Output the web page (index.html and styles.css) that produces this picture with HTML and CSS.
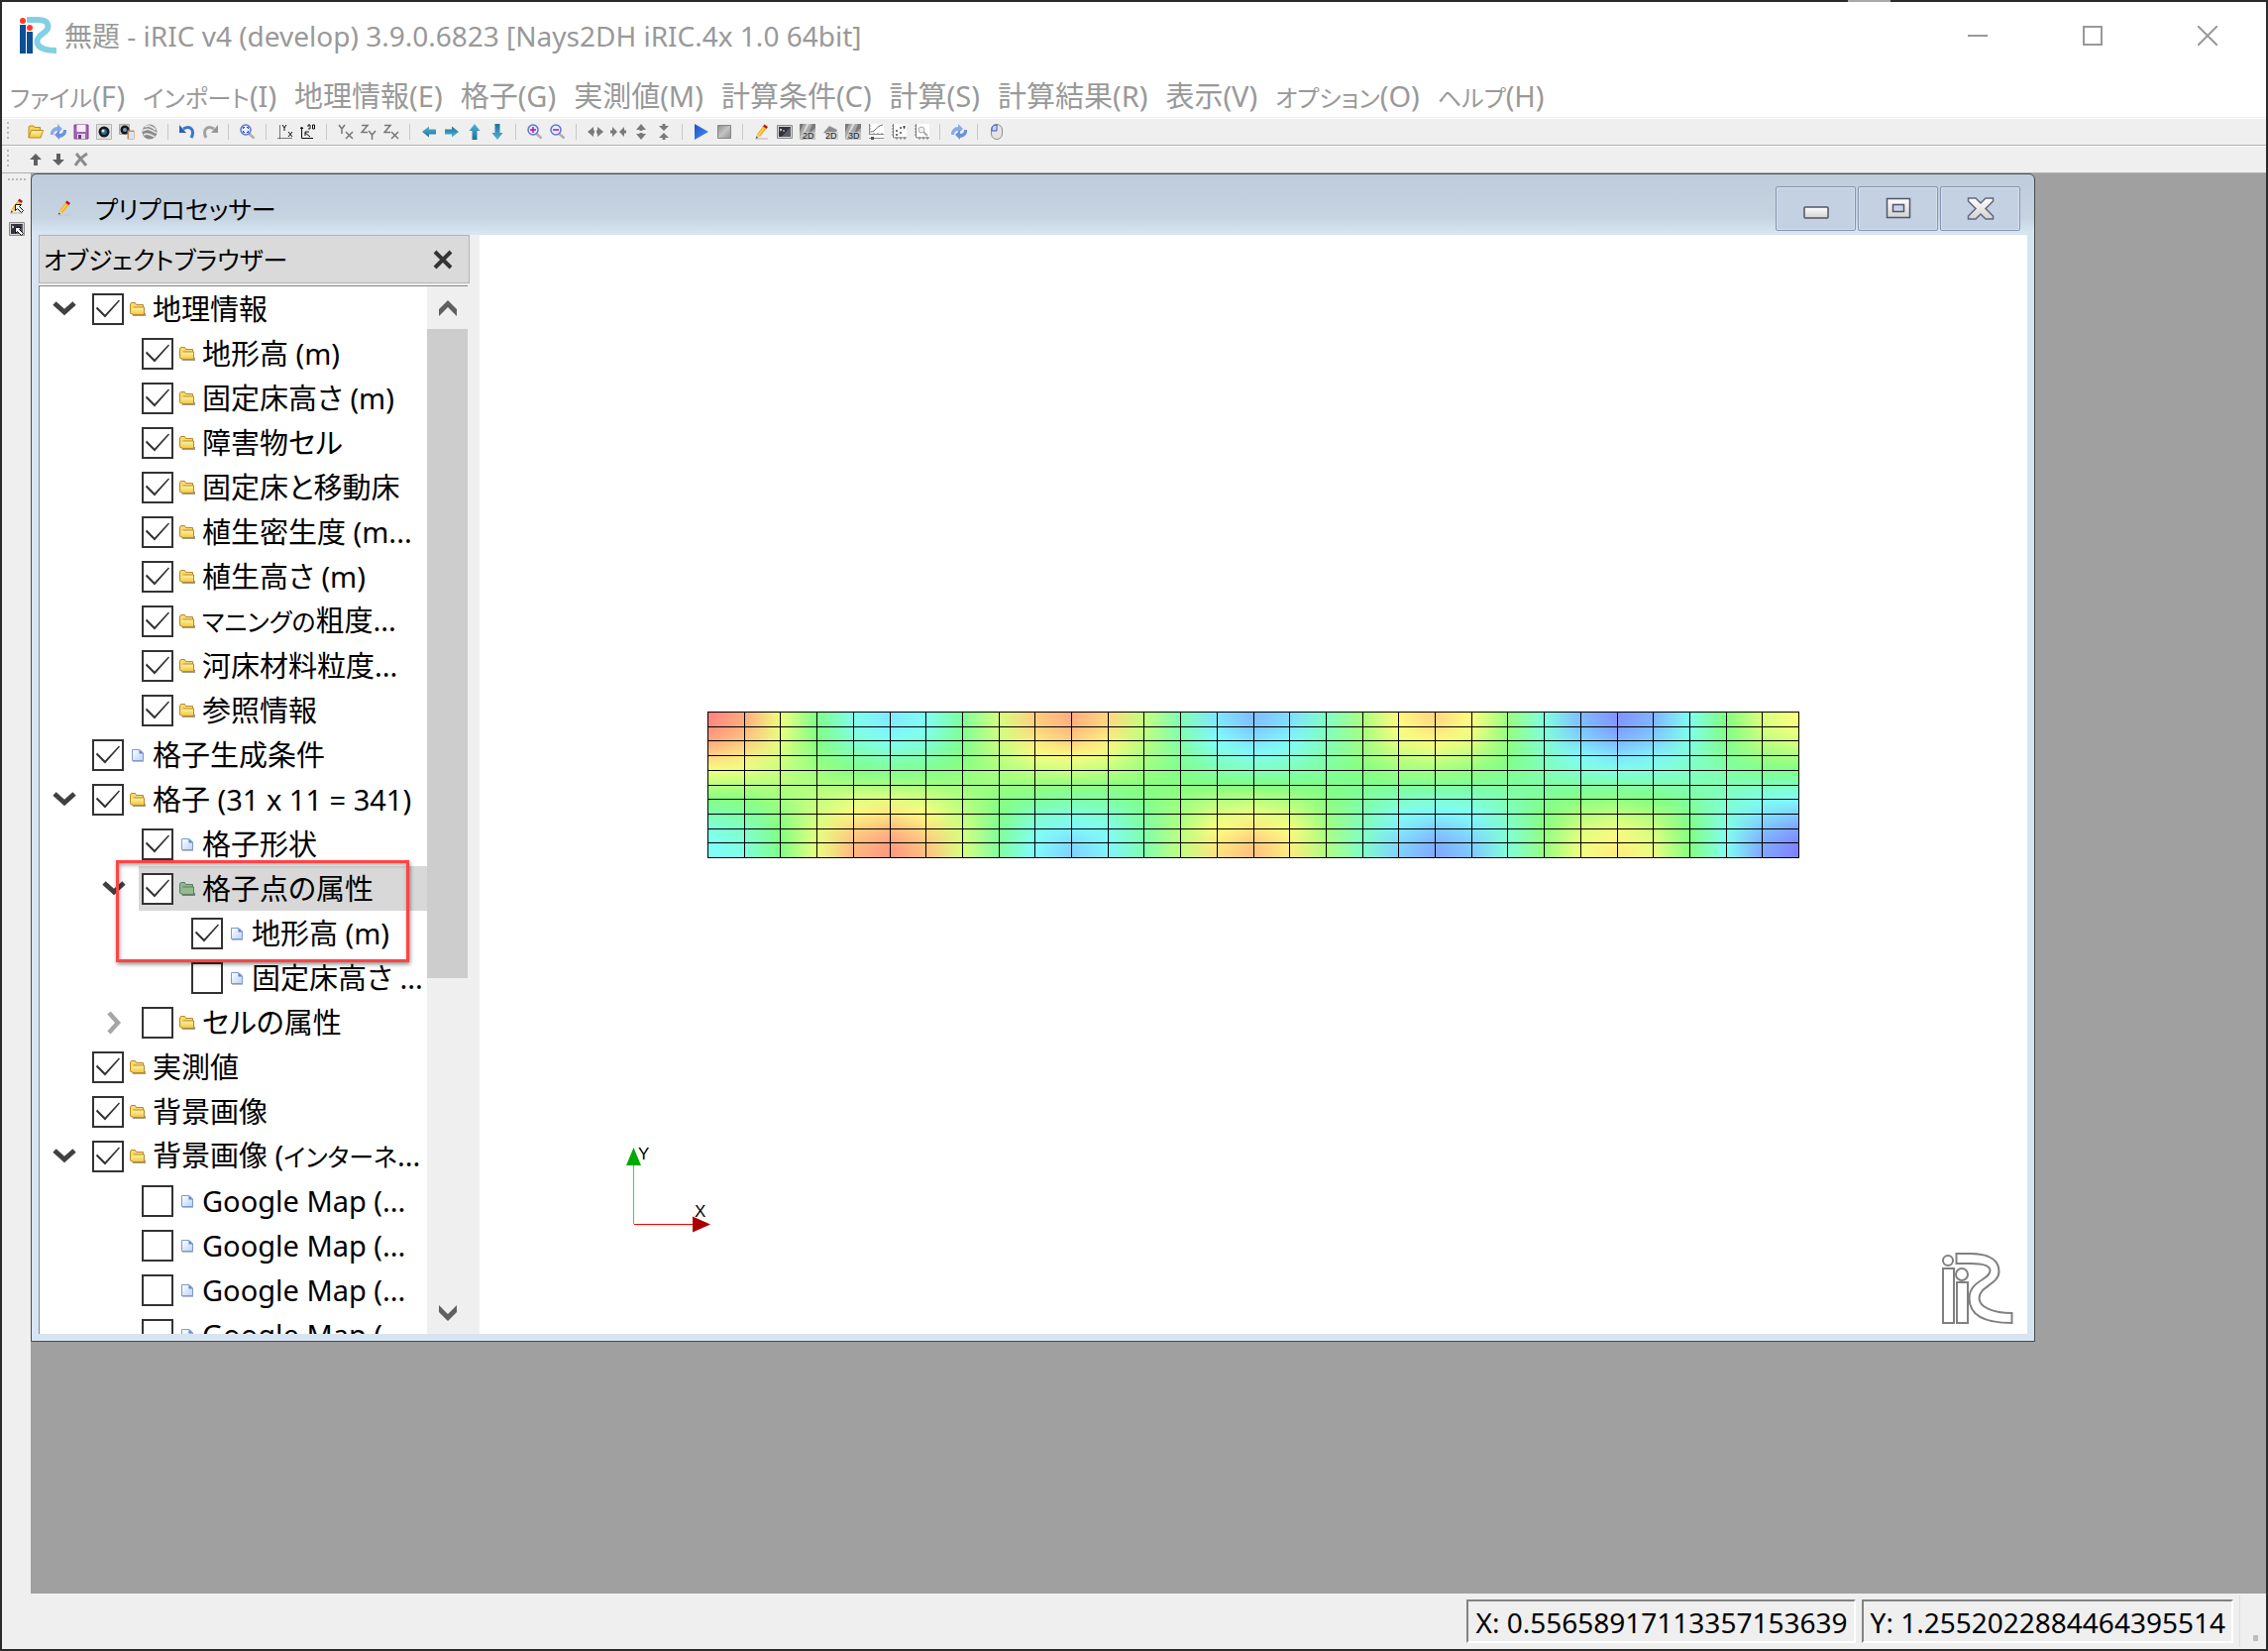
FILE: index.html
```html
<!DOCTYPE html>
<html lang="ja">
<head>
<meta charset="utf-8">
<title>iRIC</title>
<link rel="stylesheet" href="styles.css">
</head>
<body>
<svg class="defs" aria-hidden="true">
  <defs>
    <linearGradient id="gold" x1="0" y1="0" x2="0" y2="1"><stop offset="0" stop-color="#fff3a8"/><stop offset="1" stop-color="#f0c63c"/></linearGradient>
    <linearGradient id="sheet" x1="0" y1="0" x2="1" y2="1"><stop offset="0" stop-color="#ffffff"/><stop offset="1" stop-color="#b9d2f6"/></linearGradient>
    <linearGradient id="blue" x1="0" y1="0" x2="0" y2="1"><stop offset="0" stop-color="#4fb4da"/><stop offset="1" stop-color="#1f7199"/></linearGradient>
    <linearGradient id="play" x1="0" y1="0" x2="1" y2="1"><stop offset="0" stop-color="#1c50c8"/><stop offset="1" stop-color="#4a92f0"/></linearGradient>
    <linearGradient id="grey" x1="0" y1="0" x2="1" y2="1"><stop offset="0" stop-color="#8c8c8c"/><stop offset=".5" stop-color="#c4c4c4"/><stop offset="1" stop-color="#8f8f8f"/></linearGradient>
    <linearGradient id="steel" x1="0" y1="0" x2="0" y2="1"><stop offset="0" stop-color="#ffffff"/><stop offset="1" stop-color="#d2d2d2"/></linearGradient>
    <symbol id="folder" viewBox="0 0 16 16"><path d="M2 12h14V7v8H3z" fill="#77725c" opacity=".7"/><path d="M.5 12V3l1-1.500h4l1 2h7V12z" fill="#f7da6c" stroke="#b8892a"/><path d="M3.500 6h11v7.500h-11l-3-1.500" fill="url(#gold)" stroke="#b8892a"/></symbol>
    <symbol id="folder-on" viewBox="0 0 16 16"><path d="M2 12h14V7v8H3z" fill="#4d5a50" opacity=".7"/><path d="M.5 12V3l1-1.500h4l1 2h7V12z" fill="#8fb39a" stroke="#5d7f62"/><path d="M3.500 6h11v7.500h-11l-3-1.500" fill="#93b98d" stroke="#5d7f62"/></symbol>
    <symbol id="page" viewBox="0 0 16 16"><path d="M3 3h8l3 3v9H3z" fill="#8a93a8" opacity=".6"/><path d="M2.500 2.500h7.500l3.500 3.500v7.500h-11z" fill="url(#sheet)" stroke="#7d9ad0"/><path d="M9.500 2.500v4h4z" fill="#5c80c8"/></symbol>
    <symbol id="chev-down" viewBox="0 0 24 24"><path d="M2 6l10 9 10-9" fill="none" stroke="#404040" stroke-width="5"/></symbol>
    <symbol id="chev-right" viewBox="0 0 24 24"><path d="M7 2l9 10-9 10" fill="none" stroke="#a6a6a6" stroke-width="4.500"/></symbol>
    <symbol id="pencil" viewBox="0 0 16 16"><path d="M1 15h13" stroke="#c8c8c8" stroke-width="1.500"/><path d="M2 14l1-4 3 3z" fill="#e8cfa8"/><path d="M2 14.500l.5-2 1.500 1.500z" fill="#222"/><path d="M3 10.500L9 2.500l3.500 2.500-6.500 8z" fill="#f5b21d"/><path d="M4.500 11.500l6-8" stroke="#ffd968" stroke-width="1.200"/><path d="M9 2.500l1.500-2 3.500 2.500-1.500 2z" fill="#b8141c"/></symbol>
    <symbol id="console" viewBox="0 0 16 16"><path d="M.5 1.500h15v13H.5z" fill="#d8d8d8" stroke="#8a8a8a"/><path d="M2 3h12v10H2z" fill="#33343c"/><path d="M14 3v10H5z" fill="#5b5d68"/><path d="M3 5l2 1-2 1M6 7h2" stroke="#e4e4e4" fill="none"/></symbol>
    <symbol id="refresh" viewBox="0 0 16 16"><path d="M0 11a7 7 0 0 1 7-8V0l5 5-5 5V7a4 4 0 0 0-4 4z" fill="#86abe6"/><path d="M16 6a7 7 0 0 1-7 8v2l-5-5 5-5v4a4 4 0 0 0 4-4z" fill="#6a94da"/></symbol>
    <symbol id="lens" viewBox="0 0 16 16"><path d="M9.500 10l5 4.500" stroke="#b0b0b0" stroke-width="2.500"/><circle cx="6" cy="6" r="5" fill="#e6edff" stroke="#5a78d8" stroke-width="1.500"/></symbol>
    <symbol id="shade" viewBox="0 0 16 16"><path d="M0 0h16v16H0z" fill="#a8a8a8"/><path d="M0 16L7 0h3L1 16z" fill="#d8d8d8"/><path d="M0 0h4L0 9zM13 0h3v4L8 12z" fill="#7a7a7a"/><path d="M4 8h12v8H4z" fill="#c4c4c4"/></symbol>
    <symbol id="plot" viewBox="0 0 16 16"><path d="M1 0h15v16H1z" fill="#fff"/><path d="M2.500 0v14H16" fill="none" stroke="#777"/><path d="M1 2h2M1 5h2M1 8h2M1 11h2M6 13v3M10 13v3M14 13v3" stroke="#777"/></symbol>
    <symbol id="pointer" viewBox="0 0 16 16"><path d="M6.500 6.500h6l-2 2 4 4-2 2-4-4-2 2z" fill="#fff" stroke="#111"/></symbol>
    <symbol id="tri" viewBox="0 0 16 16"><path d="M0 8l6-5v3.500h1v3H6V13zM16 8l-6-5v3.500H9v3h1V13z" fill="#7a7a7a"/></symbol>
    <symbol id="tri-in" viewBox="0 0 16 16"><path d="M7 8L2 3v3.500H0v3h2V13zM9 8l5-5v3.500h2v3h-2V13z" fill="#7a7a7a"/></symbol>
    <symbol id="arrow" viewBox="0 0 16 16"><path d="M1 8l7-5.500v3h7v5H8v3z" fill="url(#blue)"/></symbol>
    <symbol id="arrow-v" viewBox="0 0 16 16"><path d="M8 0l5.500 7h-3v9h-5V7h-3z" fill="url(#blue)"/></symbol>
  </defs>
</svg>

<div class="window">
  <header class="titlebar">
    <svg class="logo" viewBox="0 0 38 38"><path d="M1 8h6v29H1zM8 15h6v22H8z" fill="#0d4f94"/><circle cx="4" cy="4" r="3" fill="#ff3a24"/><circle cx="11" cy="11" r="3" fill="#ff3a24"/><path d="M8 3h11c13 0 13 9 5 14s-10 17 14 17" fill="none" stroke="#82d0e4" stroke-width="6"/></svg>
    <h1 class="caption">無題 - iRIC v4 (develop) 3.9.0.6823 [Nays2DH iRIC.4x 1.0 64bit]</h1>
    <div class="sysbuttons">
      <button aria-label="最小化"><svg width="20" height="20" viewBox="0 0 20 20"><path d="M0 10h20" stroke="#999" stroke-width="2"/></svg></button>
      <button aria-label="最大化"><svg width="20" height="20" viewBox="0 0 20 20"><path d="M1 1h18v18H1z" fill="none" stroke="#999" stroke-width="2"/></svg></button>
      <button aria-label="閉じる"><svg width="20" height="20" viewBox="0 0 20 20"><path d="M0 0l20 20M20 0L0 20" stroke="#999" stroke-width="2"/></svg></button>
    </div>
  </header>

  <nav class="menubar">
    <button><span class="kana">ファイル</span>(F)</button><button><span class="kana">インポート</span>(I)</button><button>地理情報(E)</button><button>格子(G)</button><button>実測値(M)</button><button>計算条件(C)</button><button>計算(S)</button><button>計算結果(R)</button><button>表示(V)</button><button><span class="kana">オプション</span>(O)</button><button><span class="kana">ヘルプ</span>(H)</button>
  </nav>

  <div class="toolbar">
    <span class="grip"></span>
    <button aria-label="開く"><svg viewBox="0 0 16 16"><path d="M1 14V3l1-1h4l1 1.500h5.500V6" fill="#f6d25a" stroke="#c08d20"/><path d="M1 14l2.500-7.500h12L13 14z" fill="url(#gold)" stroke="#c08d20"/></svg></button>
    <button aria-label="再読込"><svg><use href="#refresh"/></svg></button>
    <button aria-label="保存"><svg viewBox="0 0 16 16"><path d="M1 1h14v14H1z" fill="#a561b8" stroke="#7d4292"/><path d="M3.500 1h9v7h-9z" fill="#f4eef6"/><path d="M4 10h8v5H4z" fill="#dcdce4"/><path d="M5 11h3v4H5z" fill="#6d3d80"/></svg></button>
    <button aria-label="スナップショット"><svg viewBox="0 0 16 16"><path d="M.5.5h15v15H.500z" fill="#e2e2e2" stroke="#b4b4b4"/><circle cx="8" cy="8" r="5.500" fill="#16181c"/><circle cx="8" cy="8" r="3" fill="#2c6a8c"/><circle cx="7" cy="7" r="1.500" fill="#cfeaf8"/></svg></button>
    <button aria-label="コピー"><svg viewBox="0 0 16 16"><path d="M.5.5h10v10H.500z" fill="#ccc" stroke="#aaa"/><circle cx="6" cy="6" r="4.500" fill="#16181c"/><circle cx="6" cy="6" r="2" fill="#6ba4c0"/><path d="M8.500 6.500h7v9h-7z" fill="#c98b4e"/><path d="M10 8h5v7h-5z" fill="#d5e4f8"/></svg></button>
    <button aria-label="Google Earth"><svg viewBox="0 0 16 16"><circle cx="8" cy="8" r="7.500" fill="#8a8a8a"/><path d="M1 7c5-4 9 0 14 2M2 11c5-3 8 1 11 2M3 3c4-2 8 0 11 3" stroke="#e4e4e4" stroke-width="1.800" fill="none"/></svg></button>
    <i class="sep"></i>
    <button aria-label="元に戻す"><svg viewBox="0 0 16 16"><path d="M4 5c7-4 12 1 8 9" fill="none" stroke="#3a74d0" stroke-width="3"/><path d="M0 1v8h7z" fill="#2c60bc"/></svg></button>
    <button aria-label="やり直し"><svg viewBox="0 0 16 16"><path d="M12 5c-7-4-12 1-8 9" fill="none" stroke="#a2a2a2" stroke-width="3"/><path d="M16 1v8H9z" fill="#969696"/></svg></button>
    <i class="sep"></i>
    <button aria-label="全体表示"><svg viewBox="0 0 16 16"><use href="#lens"/><path d="M3.500 5V3.500H5M7 3.500h1.500V5M8.500 7v1.500H7M5 8.500H3.500V7" fill="none" stroke="#2443b8"/></svg></button>
    <i class="sep"></i>
    <button aria-label="回転リセット"><svg viewBox="0 0 16 16"><path d="M2.500 1v14.500M0 14.500h15" stroke="#777" fill="none"/><path d="M5 1l2 3 2-3M7 4v3M11 8l4 5M15 8l-4 5" stroke="#111" fill="none"/></svg></button>
    <button aria-label="90度回転"><svg viewBox="0 0 16 16"><path d="M1.500 4v10.500H13M0 5l1.500-2L3 5M5 9l5 4M5 12V8h4" stroke="#111" fill="none"/><path d="M8 3V1h2v4H8M12.500 1h2v4h-2z" stroke="#111" fill="none"/></svg></button>
    <i class="sep"></i>
    <button aria-label="XY平面"><svg viewBox="0 0 16 16"><path d="M1 1l3 4 3-4M4 5v5M8 8l7 7M15 8l-7 7" stroke="#777" stroke-width="1.500" fill="none"/></svg></button>
    <button aria-label="YZ平面"><svg viewBox="0 0 16 16"><path d="M1 1.500h6l-6 7h6M8 7l3.500 4L15 7M11.500 11v5" stroke="#777" stroke-width="1.500" fill="none"/></svg></button>
    <button aria-label="ZX平面"><svg viewBox="0 0 16 16"><path d="M1 1.500h6l-6 7h6M8 8l7 7M15 8l-7 7" stroke="#777" stroke-width="1.500" fill="none"/></svg></button>
    <i class="sep"></i>
    <button aria-label="左へ"><svg><use href="#arrow"/></svg></button>
    <button aria-label="右へ"><svg viewBox="0 0 16 16"><use href="#arrow" transform="rotate(180 8 8)"/></svg></button>
    <button aria-label="上へ"><svg><use href="#arrow-v"/></svg></button>
    <button aria-label="下へ"><svg viewBox="0 0 16 16"><use href="#arrow-v" transform="rotate(180 8 8)"/></svg></button>
    <i class="sep"></i>
    <button aria-label="拡大"><svg viewBox="0 0 16 16"><use href="#lens"/><path d="M3 6h6M6 3v6" stroke="#b010b0" stroke-width="1.500"/></svg></button>
    <button aria-label="縮小"><svg viewBox="0 0 16 16"><use href="#lens"/><path d="M3 6h6" stroke="#b010b0" stroke-width="1.500"/></svg></button>
    <i class="sep"></i>
    <button aria-label="X拡大"><svg><use href="#tri"/></svg></button>
    <button aria-label="X縮小"><svg><use href="#tri-in"/></svg></button>
    <button aria-label="Y拡大"><svg viewBox="0 0 16 16"><use href="#tri" transform="rotate(90 8 8)"/></svg></button>
    <button aria-label="Y縮小"><svg viewBox="0 0 16 16"><use href="#tri-in" transform="rotate(90 8 8)"/></svg></button>
    <i class="sep"></i>
    <button aria-label="実行"><svg viewBox="0 0 16 16"><path d="M1 0l14 8-14 8z" fill="url(#play)"/></svg></button>
    <button aria-label="停止"><svg viewBox="0 0 16 16"><path d="M1.500 1.500h13v13h-13z" fill="url(#grey)" stroke="#858585"/></svg></button>
    <i class="sep"></i>
    <button aria-label="プリプロセッサー"><svg><use href="#pencil"/></svg></button>
    <button aria-label="コンソール"><svg><use href="#console"/></svg></button>
    <button aria-label="2D可視化"><svg viewBox="0 0 16 16"><use href="#shade"/><text x="3" y="15" class="tag">2D</text></svg></button>
    <button aria-label="2D鳥瞰図"><svg viewBox="0 0 16 16"><path d="M1 9l6-7 8 4-2 5z" fill="#8e8e8e"/><path d="M4 8h12v8H4z" fill="#d4d4d4"/><text x="3" y="15" class="tag">2D</text></svg></button>
    <button aria-label="3D可視化"><svg viewBox="0 0 16 16"><use href="#shade"/><text x="3" y="15" class="tag">3D</text></svg></button>
    <button aria-label="グラフ"><svg viewBox="0 0 16 16"><path d="M1 0h15v16H1z" fill="#fff"/><path d="M1.500 0v10M1 10.500h15M1 14.500h15M1 2h2M1 5h2M1 8h2M6 9v2M10 9v2M14 9v2" stroke="#888" fill="none"/><path d="M3 8c5 0 5-6 12-7" stroke="#666" fill="none"/><path d="M3 13h3v3H3z" fill="#555"/></svg></button>
    <button aria-label="散布図"><svg viewBox="0 0 16 16"><use href="#plot"/><path d="M5 7h2M6 6v2M9 4h2M10 3v2M12 3h3M13.500 2v3M5 11h2M6 10v2M9 9h2M10 8v2" stroke="#444"/></svg></button>
    <button aria-label="検証"><svg viewBox="0 0 16 16"><use href="#plot"/><circle cx="8" cy="6" r="3" fill="#eee" stroke="#aaa"/><path d="M10 8l4 4" stroke="#aaa" stroke-width="2"/></svg></button>
    <i class="sep"></i>
    <button aria-label="更新"><svg><use href="#refresh"/></svg></button>
    <i class="sep"></i>
    <button aria-label="マウス"><svg viewBox="0 0 16 16"><rect x="2.500" y=".5" width="11" height="15" rx="5.500" fill="#e4e4e4" stroke="#8f8f8f"/><path d="M3 7V5c0-3 2-4 5-4v6z" fill="#c9d6ff" stroke="#3858d0"/></svg></button>
  </div>

  <div class="toolbar">
    <span class="grip"></span>
    <button aria-label="上に移動"><svg viewBox="0 0 16 16"><path d="M8 2l6 6h-4v6H6V8H2z" fill="#606060"/></svg></button>
    <button aria-label="下に移動"><svg viewBox="0 0 16 16"><path d="M8 14l6-6h-4V2H6v6H2z" fill="#606060"/></svg></button>
    <button aria-label="削除"><svg viewBox="0 0 16 16"><path d="M3 2l10 12M14 2C9 5 5 9 2 14" stroke="#8c8c8c" stroke-width="3" fill="none"/></svg></button>
  </div>

  <div class="workarea">
    <div class="sidebar">
      <span class="grip-h"></span>
      <button aria-label="プリプロセッサー"><svg viewBox="0 0 16 16"><use href="#pencil"/><use href="#pointer"/></svg></button>
      <button aria-label="コンソール"><svg viewBox="0 0 16 16"><use href="#console"/><use href="#pointer"/></svg></button>
    </div>

    <main class="mdi">
      <section class="subwindow">
        <header class="subtitle">
          <svg class="icon"><use href="#pencil"/></svg>
          <h2 class="kana">プリプロセッサー</h2>
          <div class="subbuttons">
            <button aria-label="最小化"><svg width="26" height="24" viewBox="0 0 26 24"><rect x="1" y="10" width="24" height="11" rx="1" fill="url(#steel)" stroke="#51546a" stroke-width="1.500"/></svg></button>
            <button aria-label="元に戻す"><svg width="26" height="24" viewBox="0 0 26 24"><path d="M1.500 1.500h23v19h-23z" fill="url(#steel)" stroke="#51546a" stroke-width="1.500"/><path d="M7.500 7.500h11v7h-11z" fill="#c8d5e6" stroke="#51546a" stroke-width="1.500"/></svg></button>
            <button aria-label="閉じる"><svg width="28" height="24" viewBox="0 0 28 24"><path d="M1.500 1H9l5 5 5-5h7.500v3L19 11.500l7.500 7.500v3H19l-5-5-5 5H1.500v-3L9 11.500 1.500 4z" fill="url(#steel)" stroke="#62667c" stroke-width="1.500"/></svg></button>
          </div>
        </header>

        <div class="client">
          <aside class="dock">
            <header class="dockhead">
              <h3 class="kana">オブジェクトブラウザー</h3>
              <button aria-label="閉じる"><svg width="20" height="20" viewBox="0 0 20 20"><path d="M2 2l16 16M18 2L2 18" stroke="#333" stroke-width="4"/></svg></button>
            </header>
            <div class="treebox">
              <ul class="tree">
                <li class="l0"><svg class="chev"><use href="#chev-down"/></svg><label><input type="checkbox" checked><svg class="icon"><use href="#folder"/></svg><span>地理情報</span></label></li>
                <li class="l1"><label><input type="checkbox" checked><svg class="icon"><use href="#folder"/></svg><span>地形高 (m)</span></label></li>
                <li class="l1"><label><input type="checkbox" checked><svg class="icon"><use href="#folder"/></svg><span>固定床高さ (m)</span></label></li>
                <li class="l1"><label><input type="checkbox" checked><svg class="icon"><use href="#folder"/></svg><span>障害物セル</span></label></li>
                <li class="l1"><label><input type="checkbox" checked><svg class="icon"><use href="#folder"/></svg><span>固定床と移動床</span></label></li>
                <li class="l1"><label><input type="checkbox" checked><svg class="icon"><use href="#folder"/></svg><span>植生密生度 (m...</span></label></li>
                <li class="l1"><label><input type="checkbox" checked><svg class="icon"><use href="#folder"/></svg><span>植生高さ (m)</span></label></li>
                <li class="l1"><label><input type="checkbox" checked><svg class="icon"><use href="#folder"/></svg><span><span class="kana">マニングの</span>粗度...</span></label></li>
                <li class="l1"><label><input type="checkbox" checked><svg class="icon"><use href="#folder"/></svg><span>河床材料粒度...</span></label></li>
                <li class="l1"><label><input type="checkbox" checked><svg class="icon"><use href="#folder"/></svg><span>参照情報</span></label></li>
                <li class="l0"><label><input type="checkbox" checked><svg class="icon"><use href="#page"/></svg><span>格子生成条件</span></label></li>
                <li class="l0"><svg class="chev"><use href="#chev-down"/></svg><label><input type="checkbox" checked><svg class="icon"><use href="#folder"/></svg><span>格子 (31 x 11 = 341)</span></label></li>
                <li class="l1"><label><input type="checkbox" checked><svg class="icon"><use href="#page"/></svg><span>格子形状</span></label></li>
                <li class="l1 selected"><svg class="chev"><use href="#chev-down"/></svg><label><input type="checkbox" checked><svg class="icon"><use href="#folder-on"/></svg><span>格子点の属性</span></label><span class="callout"></span></li>
                <li class="l2"><label><input type="checkbox" checked><svg class="icon"><use href="#page"/></svg><span>地形高 (m)</span></label></li>
                <li class="l2"><label><input type="checkbox"><svg class="icon"><use href="#page"/></svg><span>固定床高さ ...</span></label></li>
                <li class="l1"><svg class="chev"><use href="#chev-right"/></svg><label><input type="checkbox"><svg class="icon"><use href="#folder"/></svg><span>セルの属性</span></label></li>
                <li class="l0"><label><input type="checkbox" checked><svg class="icon"><use href="#folder"/></svg><span>実測値</span></label></li>
                <li class="l0"><label><input type="checkbox" checked><svg class="icon"><use href="#folder"/></svg><span>背景画像</span></label></li>
                <li class="l0"><svg class="chev"><use href="#chev-down"/></svg><label><input type="checkbox" checked><svg class="icon"><use href="#folder"/></svg><span>背景画像 (<span class="kana">インターネ</span>...</span></label></li>
                <li class="l1"><label><input type="checkbox"><svg class="icon"><use href="#page"/></svg><span>Google Map (...</span></label></li>
                <li class="l1"><label><input type="checkbox"><svg class="icon"><use href="#page"/></svg><span>Google Map (...</span></label></li>
                <li class="l1"><label><input type="checkbox"><svg class="icon"><use href="#page"/></svg><span>Google Map (...</span></label></li>
                <li class="l1"><label><input type="checkbox"><svg class="icon"><use href="#page"/></svg><span>Google Map (...</span></label></li>
              </ul>
              <div class="scroll">
                <button aria-label="上へスクロール"><svg width="18" height="16" viewBox="0 0 18 16"><path d="M0 9l9-9 9 9v7L9 7l-9 9z" fill="#606060"/></svg></button>
                <div class="track"><span class="thumb"></span></div>
                <button aria-label="下へスクロール"><svg width="18" height="16" viewBox="0 0 18 16"><path d="M0 7l9 9 9-9V0L9 9 0 0z" fill="#606060"/></svg></button>
              </div>
            </div>
          </aside>

          <div class="view">
            <canvas class="mesh" width="1102" height="148"></canvas>
            <svg class="axes" viewBox="0 0 90 90"><path d="M10.500 18v63" stroke="#0f0"/><path d="M11 81.500h59" stroke="#f00"/><path d="M10.500 4L18 22H3z" fill="#00aa00"/><path d="M70 73.500v16L88 81.500z" fill="#aa0000"/><text x="15" y="16">Y</text><text x="72" y="74">X</text></svg>
            <svg class="mark" viewBox="0 0 74 74"><g fill="none" stroke="#808080" stroke-width="2"><circle cx="7" cy="9" r="5"/><circle cx="21" cy="23" r="6"/><path d="M2 17h11v55H2zM16 31h11v41H16zM15.500 2h14c18 0 29 6 29 18 0 13-20 15-20 27 0 9 14 15 33 15v10c-27 0-43-8-43-25 0-18 21-18 21-28 0-5-8-7-20-7h-14z"/></g></svg>
          </div>
        </div>
      </section>
    </main>
  </div>

  <footer class="statusbar">
    <output>X: 0.55658917113357153639</output>
    <output>Y: 1.2552022884464395514</output>
    <span class="sizegrip"></span>
  </footer>
</div>
<script src="mesh.js"></script>
</body>
</html>
```
FILE: styles.css
```css
* { box-sizing: border-box; }

body {
  margin: 0;
  padding: 2px;
  background: linear-gradient(#a8a8a8, #a8a8a8) 1865px 0 / 43px 2px no-repeat #2b2b2b;
  color: #000;
  font-family: "Noto Sans", "Noto Sans CJK JP", sans-serif;
  font-size: 28px;
  font-weight: 400;
  line-height: 40px;
  font-feature-settings: "palt";
}

h1, h2, h3 { margin: 0; font-size: inherit; font-weight: inherit; white-space: nowrap; }

button {
  display: flex;
  align-items: center;
  justify-content: center;
  margin: 0;
  padding: 0;
  border: 0;
  background: none;
  color: inherit;
  font: inherit;
  font-feature-settings: inherit;
  white-space: nowrap;
}

svg { display: block; flex: none; }
.defs { position: absolute; width: 0; height: 0; }
.icon { width: 16px; height: 16px; }
.kana { font-size: 25px; }

.window {
  display: flex;
  flex-direction: column;
  height: calc(100vh - 4px);
  overflow: hidden;
  background: #efefef;
}

.titlebar {
  display: flex;
  align-items: center;
  height: 70px;
  padding: 0 1px 2px 17px;
  background: #fff;
  color: #999;
}
.logo { width: 38px; height: 38px; }
.caption { flex: 1; margin-left: 8px; }
.sysbuttons { display: flex; }
.sysbuttons button { width: 116px; height: 68px; }

.menubar {
  display: flex;
  gap: 18px;
  height: 47px;
  padding: 5px 8px 0;
  border-bottom: 1px solid #efefef;
  background: #fff;
  color: #999;
  font-size: 29px;
}
.menubar button { height: 40px; align-items: baseline; }
.menubar .kana { font-size: 24px; }

.toolbar {
  display: flex;
  align-items: center;
  height: 28px;
  border-top: 1px solid #fff;
  border-bottom: 1px solid #b0b0b0;
}
.toolbar button { width: 23px; height: 24px; }
.toolbar svg, .sidebar svg { width: 16px; height: 16px; }
.grip {
  width: 2px;
  height: 20px;
  margin: 0 15px 0 5px;
  background: repeating-linear-gradient(#b8b8b8 0 2px, transparent 2px 5px);
}
.sep { width: 1px; height: 16px; margin: 0 7px; background: #c8c8c8; }
.tag { font: 9px "Liberation Sans", sans-serif; fill: #222; }

.workarea { display: flex; flex: 1; min-height: 0; }
.sidebar { display: flex; flex-direction: column; align-items: center; width: 29px; }
.sidebar button { width: 24px; height: 23px; }
.grip-h {
  width: 18px;
  height: 2px;
  margin: 5px 0 14px;
  background: repeating-linear-gradient(90deg, #b8b8b8 0 2px, transparent 2px 4px);
}

.mdi { position: relative; flex: 1; background: #a0a0a0; }
.subwindow {
  position: absolute;
  inset: 0 233px 254px 0;
  display: flex;
  flex-direction: column;
  padding: 0 7px 7px;
  border: 1px solid #4a4a4a;
  border-radius: 6px 6px 0 0;
  background: #d7e4f2;
  background-image: linear-gradient(#bfccdb, #c6d3e1 44px, #d7e4f2 58px);
}
.subtitle { display: flex; align-items: center; height: 61px; padding: 8px 7px 0 18px; }
.subtitle .icon { margin-bottom: 2px; }
.subtitle h2 { flex: 1; margin-left: 23px; }
.subbuttons { display: flex; gap: 2px; }
.subbuttons button {
  width: 81px;
  height: 45px;
  border: 1px solid #8495b2;
  border-radius: 2px;
  background: #c4d1e2;
  box-shadow: inset 0 0 0 1px #d6e0ee;
}

.client { display: flex; flex: 1; min-height: 0; background: #efefef; }
.dock { display: flex; flex-direction: column; width: 445px; padding-right: 10px; }
.dockhead {
  display: flex;
  align-items: center;
  justify-content: space-between;
  height: 49px;
  margin-bottom: 2px;
  padding: 0 16px 0 4px;
  border: 1px solid #b4b4b4;
  background: #dadada;
}
.treebox {
  display: flex;
  flex: 1;
  min-height: 0;
  margin-right: 2px;
  border: solid #828790;
  border-width: 1px 0 0 1px;
  background: #fff;
}
.tree { flex: 1; margin: 0; padding: 0; overflow: hidden; font-size: 29px; list-style: none; }
.tree li { position: relative; display: flex; align-items: center; height: 45px; }
.tree label { display: flex; flex: 1; align-items: center; height: 45px; padding-left: 3px; white-space: nowrap; }
.tree .icon { margin: 0 7px 0 6px; }
.l0 { padding-left: 50px; }
.l1 { padding-left: 100px; }
.l2 { padding-left: 150px; }
.selected label { background: #d8d8d8; }
.chev { width: 24px; height: 24px; margin: 0 13px 0 -37px; }
.tree input {
  appearance: none;
  flex: none;
  width: 32px;
  height: 32px;
  margin: 0;
  border: 2px solid #333;
  background: #fff;
}
.tree input:checked::before {
  content: "";
  display: block;
  width: 28px;
  height: 28px;
  background: #333;
  clip-path: polygon(3px 12px, 11px 20px, 25px 5px, 26px 6px, 11px 23px, 2px 14px);
}
.callout {
  position: absolute;
  z-index: 1;
  left: 77px;
  top: -6px;
  width: 296px;
  height: 103px;
  border: 3px solid #ff4444;
  box-shadow: 1px 2px 4px rgba(0, 0, 0, .45), inset 1px 2px 4px rgba(0, 0, 0, .35);
}

.scroll { display: flex; flex-direction: column; width: 41px; background: #efefef; }
.scroll button { height: 43px; }
.track { flex: 1; }
.thumb { display: block; height: 67.5%; background: #cdcdcd; }

.view { position: relative; flex: 1; background: #fff; }
.mesh { position: absolute; left: 230px; top: 481px; }
.axes { position: absolute; left: 145px; bottom: 102px; width: 90px; height: 90px; font: 17px "Liberation Sans", sans-serif; }
.mark { position: absolute; right: 13px; bottom: 9px; width: 74px; height: 74px; }

.statusbar {
  display: flex;
  align-items: center;
  justify-content: flex-end;
  gap: 6px;
  height: 56px;
  padding-right: 5px;
}
.statusbar output {
  height: 44px;
  padding: 1px 6px 0 7px;
  border: 2px solid;
  border-color: #828282 #fff #fff #828282;
  white-space: nowrap;
}
.sizegrip { width: 22px; height: 52px; border-left: 1px solid #dcdcdc; background: linear-gradient(#bdbdbd, #bdbdbd) right 3px bottom 6px / 5px 6px no-repeat; }
```
FILE: mesh.js
```js
const NI = 30, NJ = 10;
const canvas = document.querySelector('.mesh');
const ctx = canvas.getContext('2d');
const W = canvas.width - 1, H = canvas.height - 1;

function elevation(i, j) {
  return 0.62 - 0.0083 * i + 0.38 * Math.cos(Math.PI * i / 5) * Math.cos(Math.PI * j / 10);
}

function color(z) {
  const h = (1 - Math.min(1, Math.max(0, z))) * 4;
  const f = h - Math.floor(h);
  const rgb = [[1, f, 0], [1 - f, 1, 0], [0, 1, f], [0, 1 - f, 1], [0, 0, 1]][Math.floor(h)];
  return rgb.map(c => 128 + 127 * c);
}

const node = [];
for (let j = 0; j <= NJ; j++) {
  node.push([]);
  for (let i = 0; i <= NI; i++) node[j].push(color(elevation(i, j)));
}

const image = ctx.createImageData(W + 1, H + 1);
for (let y = 0; y <= H; y++) {
  for (let x = 0; x <= W; x++) {
    const u = x / W * NI, v = y / H * NJ;
    const i = Math.min(NI - 1, Math.floor(u)), j = Math.min(NJ - 1, Math.floor(v));
    const a = u - i, b = v - j, p = (y * (W + 1) + x) * 4;
    for (let k = 0; k < 3; k++) {
      image.data[p + k] =
        (node[j][i][k] * (1 - a) + node[j][i + 1][k] * a) * (1 - b) +
        (node[j + 1][i][k] * (1 - a) + node[j + 1][i + 1][k] * a) * b;
    }
    image.data[p + 3] = 255;
  }
}
ctx.putImageData(image, 0, 0);

ctx.fillStyle = '#000';
for (let i = 0; i <= NI; i++) ctx.fillRect(Math.round(i * W / NI), 0, 1, H + 1);
for (let j = 0; j <= NJ; j++) ctx.fillRect(0, Math.round(j * H / NJ), W + 1, 1);
```
